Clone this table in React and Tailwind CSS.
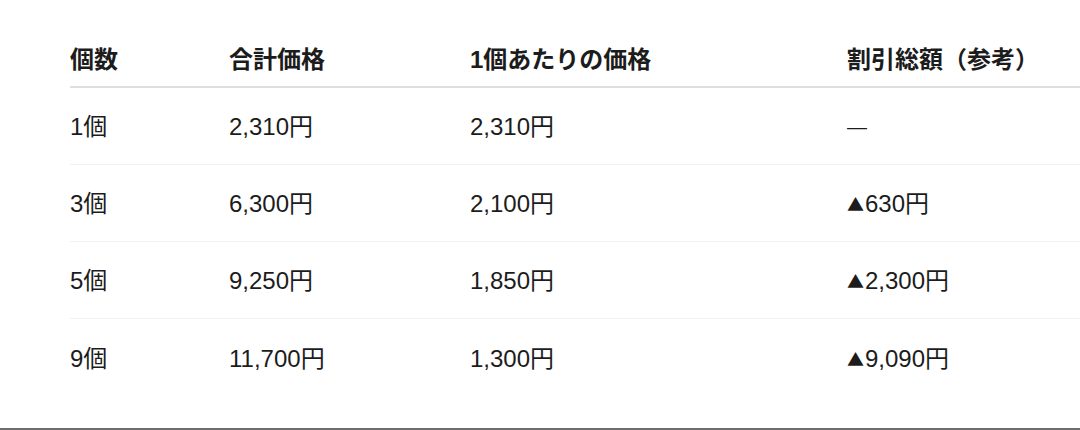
import React from "react";

const rows = [
  { qty: "1個", total: "2,310円", unit: "2,310円", off: "—", tri: false },
  { qty: "3個", total: "6,300円", unit: "2,100円", off: "630円", tri: true },
  { qty: "5個", total: "9,250円", unit: "1,850円", off: "2,300円", tri: true },
  { qty: "9個", total: "11,700円", unit: "1,300円", off: "9,090円", tri: true },
];

const cols = "grid grid-cols-[159px_241px_377px_1fr] items-center";

export default function App() {
  return (
    <div
      className="h-[430px] bg-white flex flex-col text-[#1c1c1c]"
      style={{ fontFamily: '"Liberation Sans", "Noto Sans CJK JP", sans-serif' }}
    >
      <div className="flex-1 pl-[70px] pt-[30px]">
        <div className={`${cols} h-[58px] pt-[3px] border-b-2 border-[#dedede] text-[24px] font-bold`}>
          <div>個数</div>
          <div>合計価格</div>
          <div>1個あたりの価格</div>
          <div>割引総額（参考）</div>
        </div>
        {rows.map((r, i) => (
          <div
            key={r.qty}
            className={`${cols} h-[77px] pt-[2px] text-[24px] ${i < rows.length - 1 ? "border-b border-[#f1f1f1]" : ""}`}
          >
            <div>{r.qty}</div>
            <div>{r.total}</div>
            <div>{r.unit}</div>
            <div className="flex items-center">
              {r.tri && <span className="text-[17px] mr-[1px]" style={{ fontFamily: '"Noto Sans CJK JP", sans-serif' }}>▲</span>}
              {r.tri ? <span>{r.off}</span> : <span className="text-[20px]">{r.off}</span>}
            </div>
          </div>
        ))}
      </div>
      <div className="h-[2px] bg-[#6e6e6e]" />
    </div>
  );
}
